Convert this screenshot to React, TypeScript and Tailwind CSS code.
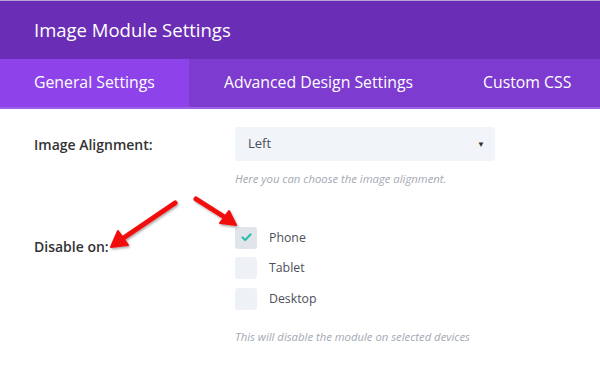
export default function App() {
  const devices = [
    { name: 'Phone', checked: true },
    { name: 'Tablet', checked: false },
    { name: 'Desktop', checked: false },
  ]

  return (
    <div className="relative w-[600px] h-[375px] overflow-hidden bg-white font-['Open_Sans',sans-serif]">
      {/* Header */}
      <div className="h-[59px] bg-[#6a2eb6] border-t border-[#b9a6d6] flex items-center px-[34px]">
        <h1 className="text-[18.5px] text-white font-normal leading-none">Image Module Settings</h1>
      </div>

      {/* Tabs */}
      <div className="h-[50px] flex bg-[#7e3bd0] border-b-2 border-[#9d62e6] text-white text-[15.8px]">
        <div className="w-[189px] bg-[#8e42e9] flex items-center pl-[34px]">General Settings</div>
        <div className="w-[259px] flex items-center pl-[35px]">Advanced Design Settings</div>
        <div className="flex-1 flex items-center pl-[35px]">Custom CSS</div>
      </div>

      {/* Content */}
      <div className="px-[34px] pt-[18px]">
        <div className="flex">
          <div className="w-[201px] h-[34px] flex items-center text-[14px] font-semibold text-[#333]">
            Image Alignment:
          </div>
          <div>
            <div className="w-[260px] h-[34px] rounded-[3px] bg-[#f1f4f8] flex items-center justify-between pl-[13px] pr-[10px] text-[13px] text-[#4b4f58]">
              <span>Left</span>
              <span className="text-[8px] text-[#333]">▼</span>
            </div>
            <p className="mt-[10px] text-[11.3px] italic text-[#a3a9b3]">Here you can choose the image alignment.</p>
          </div>
        </div>

        <div className="flex mt-[39px]">
          <div className="w-[201px] pt-[9px] text-[14px] font-semibold text-[#333]">Disable on:</div>
          <div>
            <div className="flex flex-col gap-[8.5px]">
              {devices.map((d) => (
                <div key={d.name} className="flex items-center gap-[12px]">
                  <div
                    className={
                      d.checked
                        ? 'w-[22px] h-[22px] rounded-[3px] bg-[#e1e5eb] flex items-center justify-center'
                        : 'w-[22px] h-[22px] rounded-[3px] bg-[#eef1f6]'
                    }
                  >
                    {d.checked && (
                      <svg width="11" height="9" viewBox="0 0 11 9">
                        <path d="M1.5 4.5 L4.2 7 L9.5 1.5" fill="none" stroke="#2cbfae" strokeWidth="2.2" strokeLinecap="round" strokeLinejoin="round" />
                      </svg>
                    )}
                  </div>
                  <span className="text-[12.3px] text-[#4b4f58]">{d.name}</span>
                </div>
              ))}
            </div>
            <p className="mt-[19px] text-[11.3px] italic text-[#a3a9b3]">This will disable the module on selected devices</p>
          </div>
        </div>
      </div>

      {/* Annotation arrows */}
      <svg className="absolute left-0 top-0 pointer-events-none" width="600" height="375">
        <defs>
          <filter id="sh" x="-20%" y="-20%" width="140%" height="140%">
            <feDropShadow dx="1" dy="1.5" stdDeviation="1.2" floodColor="#000" floodOpacity="0.35" />
          </filter>
        </defs>
        <g filter="url(#sh)" fill="#f20f0f" stroke="#f20f0f" strokeLinecap="round" strokeLinejoin="round">
          <line x1="175" y1="203" x2="122" y2="239" strokeWidth="5" />
          <polygon points="111,247 118,231 128,245" strokeWidth="2" />
          <line x1="196" y1="199" x2="226" y2="218" strokeWidth="5" />
          <polygon points="236,225 220,223 229,211" strokeWidth="2" />
        </g>
      </svg>
    </div>
  )
}
